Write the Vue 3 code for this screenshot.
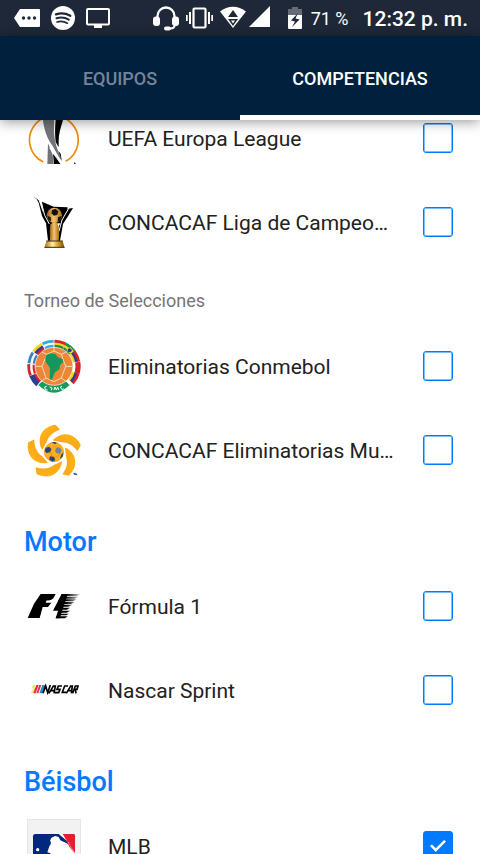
<script setup>
import { reactive } from 'vue'

const sections = reactive([
  {
    title: '',
    groups: [
      {
        title: '',
        items: [
          { id: 'europa', name: 'UEFA Europa League', on: false },
          { id: 'liga', name: 'CONCACAF Liga de Campeones', on: false }
        ]
      },
      {
        title: 'Torneo de Selecciones',
        items: [
          { id: 'conmebol', name: 'Eliminatorias Conmebol', on: false },
          { id: 'concacaf', name: 'CONCACAF Eliminatorias Mundial', on: false }
        ]
      }
    ]
  },
  {
    title: 'Motor',
    groups: [
      {
        title: '',
        items: [
          { id: 'f1', name: 'Fórmula 1', on: false },
          { id: 'nascar', name: 'Nascar Sprint', on: false }
        ]
      }
    ]
  },
  {
    title: 'Béisbol',
    groups: [{ title: '', items: [{ id: 'mlb', name: 'MLB', on: true }] }]
  }
])

// Flags of the Conmebol ring: angle from the top, colour bands from the outside in
const ring = [
  { a: -42, c: ['#f7d21c', '#2b3f92', '#d8232a'] },
  { a: -14, c: ['#36a9e1', '#ffffff', '#36a9e1'] },
  { a: 14, c: ['#d8232a', '#f7d21c', '#16904f'] },
  { a: 40, c: ['#16904f', '#f7d21c', '#16904f'] },
  { a: 66, c: ['#d8232a', '#2b3f92', '#f7d21c'] },
  { a: 93, c: ['#d8232a', '#d8232a', '#ffffff'] },
  { a: 119, c: ['#d8232a', '#2b3f92', '#f7d21c'] },
  { a: -70, c: ['#3a7cc4', '#ffffff', '#3a7cc4'] },
  { a: -98, c: ['#d8232a', '#ffffff', '#d8232a'] },
  { a: -125, c: ['#2b3f92', '#2b3f92', '#d8232a'] }
]
const petals = [0, 72, 144, 216, 288]
</script>

<template>
  <div class="screen">
    <div class="status">
      <div class="notes">
        <svg width="26" height="20" viewBox="0 0 26 20"><path fill="#fff" d="M6 1h19a1 1 0 0 1 1 1v16a1 1 0 0 1-1 1H6L0 10z" /><g fill="#1f2838"><circle cx="9.500" cy="10" r="1.700" /><circle cx="15" cy="10" r="1.700" /><circle cx="20.500" cy="10" r="1.700" /></g></svg>
        <svg width="24" height="24" viewBox="0 0 24 24"><circle cx="12" cy="12" r="12" fill="#fff" /><g fill="none" stroke="#1f2838" stroke-linecap="round"><path stroke-width="2.400" d="M5 8.300c5-1.500 10-1 14.300 1.400" /><path stroke-width="2" d="M5.500 12.300c4-1.300 8.600-.8 12.300 1.300" /><path stroke-width="1.700" d="M6 16c3.600-1 7.200-.6 10.300 1.200" /></g></svg>
        <svg width="24" height="20" viewBox="0 0 24 20"><rect x="1" y="1" width="22" height="15.500" rx="1" fill="none" stroke="#fff" stroke-width="2" /><path fill="#fff" d="M8 16h8v4H8z" /></svg>
      </div>
      <div class="system">
        <svg width="26" height="25" viewBox="0 0 26 25"><path fill="none" stroke="#fff" stroke-width="2.300" d="M4.500 12V10a8.500 8.500 0 0 1 17 0v2" /><rect x="0" y="10.500" width="7" height="9.500" rx="3" fill="#fff" /><rect x="19" y="10.500" width="7" height="9.500" rx="3" fill="#fff" /><path fill="none" stroke="#fff" stroke-width="2" d="M22 18c0 3-2 4.500-5 4.500" /><rect x="11" y="20.500" width="7" height="4" rx="2" fill="#fff" /></svg>
        <svg width="27" height="22" viewBox="0 0 27 22"><rect x="7.500" y="1.500" width="12" height="19" rx="1" fill="none" stroke="#fff" stroke-width="2.200" /><path fill="#fff" d="M3 5h2v12H3zM0 8h1.700v6H0zM22 5h2v12h-2zM25.300 8H27v6h-1.700z" /></svg>
        <div class="radio">
          <svg width="26" height="22" viewBox="0 0 26 22"><path fill="#fff" d="M0 5.500C7.500-.8 18.500-.8 26 5.500L13 22z" /><path fill="#1f2838" d="M13 4l5 7H8zM8 13h10l-5 7z" /><path fill="#fff" d="M11 14.500h4l-2 3z" /></svg>
          <svg class="signal" width="21" height="21" viewBox="0 0 21 21"><path fill="#fff" d="M21 0v21H0z" /></svg>
        </div>
      </div>
      <div class="power">
        <svg width="14" height="22" viewBox="0 0 14 22"><path fill="#656b77" d="M4 0h6v2h4v6H0V2h4z" /><path fill="#fff" d="M0 8h14v13a1 1 0 0 1-1 1H1a1 1 0 0 1-1-1z" /><path fill="#1f2838" d="M10 6L3 13.500l4 1L4 20l7.500-7.500-4-1z" /></svg>
        <span class="percent">71 %</span>
      </div>
      <time class="clock">12:32 p. m.</time>
    </div>

    <nav class="tabs">
      <button type="button" class="tab">EQUIPOS</button>
      <button type="button" class="tab active" aria-current="page">COMPETENCIAS</button>
    </nav>

    <main class="content">
      <div class="list">
        <section v-for="(section, s) in sections" :key="s">
          <h2 v-if="section.title" class="title">{{ section.title }}</h2>
          <template v-for="(group, g) in section.groups" :key="g">
            <h3 v-if="group.title" class="subtitle">{{ group.title }}</h3>
            <label v-for="item in group.items" :key="item.id" class="row" :for="item.id">
              <svg v-if="item.id === 'europa'" class="logo" viewBox="33 -3 162 162">
                <path fill="none" stroke="#ef8a0c" stroke-width="5" d="M82 150A73 73 0 1 1 149 148" />
                <path fill="#fff" d="M76 0h68l-16 90 16 60H92l6-80z" />
                <path fill="#737477" d="M78 0h37l-1 50c0 30 6 55 20 84l4 14-8-11-22-38C92 77 82 50 78 0z" />
                <path fill="#737477" d="M96 94l14 34 3 28H94z" />
                <path fill="#000" d="M121 0h22l-3 28c-7 22-12 40-12 60v18l-9-16c-3-26-2-50 2-90zM111 126l10 8 13 22h-20zM127 117l7 8 3 20zM174 150l6 6h-5z" />
                <path fill="none" stroke="#fff" stroke-width="3" d="M101 108l14 20 19 27" />
              </svg>

              <svg v-else-if="item.id === 'liga'" class="logo" viewBox="33 27 162 162">
                <defs>
                  <linearGradient id="gold"><stop offset="0" stop-color="#9d5c09" /><stop offset=".45" stop-color="#f5c56c" /><stop offset="1" stop-color="#a76b12" /></linearGradient>
                  <linearGradient id="base"><stop offset="0" stop-color="#b36b06" /><stop offset=".4" stop-color="#fff0a0" /><stop offset=".7" stop-color="#d69a22" /><stop offset="1" stop-color="#7a4a05" /></linearGradient>
                </defs>
                <path fill="#000" d="M51 30l17 13 10 28 10 26 16 16-1 51h-7l-6-52-12-22-10-40-6-10zM78 47l35 15 42 2-6 27-15 20-30 4-20-20zM155 68l16-2-16 26-14 22-9 50h-8l5-44z" />
                <path fill="none" stroke="#fff" stroke-width="3" d="M75 46l11 42 14 26M160 64l-22 38-9 34" />
                <path fill="url(#gold)" d="M108 110h15c8 14 7 38 5 54h-24c-4-20-4-40 4-54z" />
                <circle cx="115" cy="88" r="23" fill="url(#gold)" />
                <path fill="#16100a" d="M108 72l10-4 9 8-3 10-10 3-8-7zM94 89l10 5 1 12-8-5zM126 94l10-4-3 13-8 5z" />
                <path fill="url(#base)" d="M91 165h49l5 19H86z" />
                <path stroke="#3d2503" stroke-width="3" d="M85 184h61M91 165h49" />
              </svg>

              <svg v-else-if="item.id === 'conmebol'" class="logo" viewBox="33 27 162 162">
                <circle cx="114" cy="109" r="80" fill="#fff" />
                <g v-for="flag in ring" :key="flag.a" :transform="`rotate(${flag.a} 114 109)`">
                  <path :fill="flag.c[0]" d="M96 31a80 80 0 0 1 36 0l-2 10a72 72 0 0 0-32 0z" />
                  <path :fill="flag.c[1]" d="M98 39a72 72 0 0 1 32 0l-2 9a64 64 0 0 0-28 0z" />
                  <path :fill="flag.c[2]" d="M100 46a64 64 0 0 1 28 0l-2 10a58 58 0 0 0-24 0z" />
                </g>
                <path fill="#1b9a5c" d="M67 165l15-14q32 14 64 0l15 14q-47 46-94 0z" />
                <path fill="#f6dc24" d="M151 59l13-8 9 13-11 7z" />
                <circle cx="161" cy="61" r="6" fill="#23418f" />
                <circle cx="114" cy="109" r="57" fill="#ec8738" stroke="#fff" stroke-width="2" />
                <path fill="none" stroke="#fff" stroke-width="2" d="M93 73l21-10 22 10 13 36-13 35-22 11-24-11-12-35zM114 53v10M93 73L78 67M136 73l16-8M149 109h21M136 144l13 10M90 144l-13 9M78 109H58" />
                <path fill="#159660" d="M91 75l14-5 14 3 6 8 15 7 2 7-10 11-2 12-13 9-5 10-4 12-7-1 1-35-13-17-1-12z" />
                <path fill="none" stroke="#fff" stroke-width="3" d="M92 169l-6 2 2 8 7 1M101 171l7 3-2 7M114 180l3-9 4 9 4-9 3 9M138 169l-5 2 5 8 5-3" />
              </svg>

              <svg v-else-if="item.id === 'concacaf'" class="logo" viewBox="33 21 162 162">
                <defs>
                  <linearGradient id="petal" x1="0" y1="0" x2="1" y2="1"><stop offset="0" stop-color="#fdb913" /><stop offset=".6" stop-color="#fba51a" /><stop offset="1" stop-color="#f58a1f" /></linearGradient>
                </defs>
                <g v-for="angle in petals" :key="angle" :transform="`rotate(${angle} 114 109)`">
                  <path fill="url(#petal)" d="M77 99C60 62 82 30 119 26L132 41C114 47 98 58 92 78L79 101z" />
                </g>
                <circle cx="114" cy="108" r="32" fill="#fff" />
                <circle cx="114" cy="108" r="29" fill="#fcb216" stroke="#ef8b16" stroke-width="2" />
                <path fill="none" stroke="#e77d17" stroke-width="2" d="M102 103l13-12 11 3M102 103l5 17-9 6M126 94l8 18-15 13M107 120l12 5" />
                <path fill="#24458c" d="M89 95l11-3 6 8-4 9-11 2-5-7zM107 79l10-1 6 3-6 4zM102 121l12 2 4 9-8 5-10-6zM135 117l7-8-2 13-8 7z" />
                <path fill="#7180ae" d="M120 97l10-3 7 8-5 11-10-1-5-7z" />
                <path fill="none" stroke="#24458c" stroke-width="3" d="M172 172h4v5M179 177v-5l4 4v2" />
              </svg>

              <svg v-else-if="item.id === 'f1'" class="logo" viewBox="33 -3 162 162">
                <defs>
                  <linearGradient id="speed"><stop offset=".45" stop-color="#000" /><stop offset="1" stop-color="#000" stop-opacity=".15" /></linearGradient>
                </defs>
                <path fill="#000" d="M74 42h45l-7 13c-7 6-13 8-20 6l-3 7h17l-10 13H80l-9 33H35l19-43z" />
                <path fill="url(#speed)" d="M137 42h57l-12 6h-48zM133 50h54l-12 6h-45zM129 58h53l-12 6h-44zM126 66h50l-11 6h-42zM122 74h47l-12 6h-38zM116 83h46l-9 6h-39zM127 92h36l-11 6h-27zM124 101h35l-8 5h-29zM121 109h34l-8 6h-28z" />
                <path fill="#000" d="M137 42h18l-16 50h-28zM127 90h12l-7 25h-13z" />
              </svg>

              <svg v-else-if="item.id === 'nascar'" class="logo" viewBox="33 -21 162 162">
                <path fill="#f9df74" d="M51 45h8l-4 10 4 4-7 11h-8l8-14-4-3z" />
                <path fill="#e62d46" d="M61 45h7l-9 25h-7zM70 45h6l-9 25h-6z" />
                <path fill="#2587ce" d="M79 45h10l-9 25H70z" />
                <path fill="none" stroke="#000" stroke-width="5" d="M81 70l8-22 6 20 8-23M99 70l13-22h6l-4 22M104 62h12M138 48h-11l-4 10h9l-4 10h-11M156 48h-10l-7 19h11M151 70l13-22h5l-3 22M155 62h12M170 70l8-22h8l-3 10h-9M178 59l2 11" />
              </svg>

              <svg v-else class="logo" viewBox="33 27 162 162">
                <path fill="#f2f2f2" stroke="#e6e6e6" stroke-width="6" d="M33 27h162v162H33z" />
                <rect x="51" y="72" width="126" height="70" rx="7" fill="#00287f" />
                <path fill="#e41f2d" d="M138 72h33q6 0 6 6v58q0 6-6 6h-15l18-9z" />
                <path fill="#fff" d="M128 72h12l37 58v12H96l8-12-10-3 6-18 6-10-3-8 4-7 11-5 10 3 5 8 1 8 13 4 14-2z" />
                <path fill="#00287f" d="M126 72l32 30-13 1-22-9-5-22z" />
                <path fill="#fff" d="M103 91l4-8 11-5 10 3 5 10 22 10-10 3-20-3-20 0z" />
                <path fill="#e41f2d" d="M141 72l34 58-15-20z" />
                <circle cx="65" cy="119" r="5" fill="#fff" />
              </svg>

              <span class="name">{{ item.name }}</span>
              <input :id="item.id" v-model="item.on" type="checkbox" class="check" />
            </label>
          </template>
        </section>
      </div>
    </main>
  </div>
</template>

<style>
body {
  margin: 0;
  background: #fff;
}
</style>

<style scoped>
.screen {
  display: flex;
  flex-direction: column;
  height: 100vh;
  overflow: hidden;
  font-family: Roboto, sans-serif;
  color: #212121;
}
.status {
  display: flex;
  flex: none;
  align-items: center;
  height: 36px;
  padding: 0 12px 0 14px;
  box-sizing: border-box;
  background: #1f2838;
  color: #fff;
}
.notes {
  display: flex;
  align-items: center;
  gap: 11px;
  margin-right: auto;
}
.system {
  display: flex;
  align-items: center;
  gap: 7px;
  margin-right: 18px;
}
.radio {
  display: flex;
  align-items: flex-start;
  gap: 3px;
  padding-bottom: 2px;
}
.power {
  display: flex;
  align-items: center;
  gap: 9px;
  margin-right: 14px;
}
.percent {
  font-size: 18px;
  white-space: nowrap;
}
.clock {
  padding-top: 1px;
  font-size: 21px;
  font-weight: 500;
  white-space: nowrap;
}
.tabs {
  position: relative;
  z-index: 1;
  display: flex;
  flex: none;
  height: 84px;
  background: #00203d;
  box-shadow: 0 2px 12px rgba(0, 0, 0, 0.4);
}
.tab {
  flex: 1;
  padding: 5px 0 0;
  border: 0;
  border-bottom: 5px solid transparent;
  background: none;
  color: #73859a;
  font: 500 18px Roboto, sans-serif;
}
.tab.active {
  border-bottom-color: #fff;
  color: #fff;
}
.content {
  flex: 1;
  min-height: 0;
  overflow: hidden;
}
.list {
  margin-top: -24px;
}
.title {
  margin: 0;
  padding: 34px 24px 6px;
  color: #007aff;
  font-size: 27px;
  font-weight: 500;
  line-height: 32px;
}
.subtitle {
  margin: 0;
  padding: 25px 24px 11px;
  color: #757575;
  font-size: 18px;
  font-weight: 400;
  line-height: 24px;
}
.row {
  display: flex;
  align-items: center;
  gap: 27px;
  height: 84px;
  padding: 0 27px;
}
.logo {
  flex: none;
  width: 54px;
  height: 54px;
}
.name {
  flex: 1;
  min-width: 0;
  padding-top: 2px;
  overflow: hidden;
  font-size: 21px;
  line-height: 28px;
  text-overflow: ellipsis;
  white-space: nowrap;
}
.check {
  display: grid;
  flex: none;
  place-items: center;
  width: 30px;
  height: 30px;
  margin: 0;
  border: 1px solid #007aff;
  border-radius: 3px;
  background: #fff;
  box-shadow: inset 0 0 0 1px #80bdff;
  appearance: none;
}
.check:checked {
  background: #007aff;
  box-shadow: none;
}
.check:checked::after {
  width: 16px;
  height: 12px;
  background: #fff;
  clip-path: polygon(0 50%, 12% 38%, 36% 68%, 88% 0, 100% 12%, 36% 100%);
  content: '';
}
</style>
